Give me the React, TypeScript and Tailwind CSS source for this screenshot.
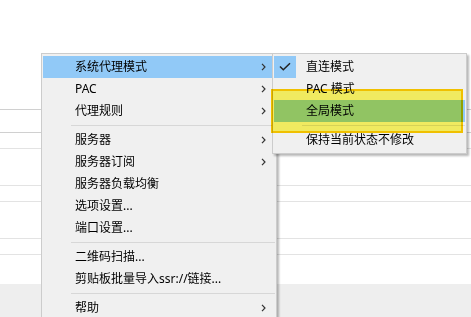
import { Fragment } from "react";

type MenuEntry =
  | { kind: "item"; label: string; arrow?: boolean; active?: boolean; checked?: boolean }
  | { kind: "sep" };

const mainMenu: MenuEntry[] = [
  { kind: "item", label: "系统代理模式", arrow: true, active: true },
  { kind: "item", label: "PAC", arrow: true },
  { kind: "item", label: "代理规则", arrow: true },
  { kind: "sep" },
  { kind: "item", label: "服务器", arrow: true },
  { kind: "item", label: "服务器订阅", arrow: true },
  { kind: "item", label: "服务器负载均衡" },
  { kind: "item", label: "选项设置..." },
  { kind: "item", label: "端口设置..." },
  { kind: "sep" },
  { kind: "item", label: "二维码扫描..." },
  { kind: "item", label: "剪贴板批量导入ssr://链接..." },
  { kind: "sep" },
  { kind: "item", label: "帮助", arrow: true },
];

const subMenu: MenuEntry[] = [
  { kind: "item", label: "直连模式", checked: true },
  { kind: "item", label: "PAC 模式" },
  { kind: "item", label: "全局模式", active: true },
  { kind: "sep" },
  { kind: "item", label: "保持当前状态不修改" },
];

const Chevron = () => (
  <svg width="5" height="8" viewBox="0 0 5 8" className="shrink-0">
    <path d="M1 0.8 L4 4 L1 7.2" fill="none" stroke="#333" strokeWidth="1.2" />
  </svg>
);

const Check = () => (
  <svg width="22" height="22" viewBox="0 0 22 22">
    <path d="M6 10.5 L9.3 13.8 L16 7.2" fill="none" stroke="#222" strokeWidth="1.5" />
  </svg>
);

const Menu = ({ entries, className }: { entries: MenuEntry[]; className: string }) => (
  <div
    className={`absolute flex flex-col border border-[#cccccc] bg-[#f0f0f0] px-[1px] py-[2px] shadow-[2px_2px_2px_rgba(0,0,0,0.28)] ${className}`}
  >
    {entries.map((e, i) => (
      <Fragment key={i}>
        {e.kind === "sep" ? (
          <div className="flex h-[7px] items-center pl-[28px]">
            <div className="h-px w-full bg-[#d7d7d7]" />
          </div>
        ) : (
          <div
            className={`relative flex h-[22px] items-center pl-[32px] pr-[9px] text-[12px] text-black ${
              e.active ? "bg-[#91c9f7]" : ""
            }`}
          >
            {e.checked ? (
              <div className="absolute left-0 top-0 h-[22px] w-[22px] bg-[#91c9f7]">
                <Check />
              </div>
            ) : null}
            <span className="flex-1 leading-none">{e.label}</span>
            {e.arrow ? <Chevron /> : null}
          </div>
        )}
      </Fragment>
    ))}
  </div>
);

export default function App() {
  return (
    <div
      className="relative h-[317px] w-[471px] overflow-hidden bg-white"
      style={{ fontFamily: '"Noto Sans", "Noto Sans CJK SC", sans-serif' }}
    >
      <div className="flex h-full flex-col">
        <div className="h-[110px] border-b border-[#d0d0d0]" />
        <div className="h-[23px] border-b border-[#d0d0d0]" />
        <div className="h-[16px] border-b border-[#e3e3e3]" />
        <div className="h-[37px] border-b border-[#e3e3e3]" />
        <div className="h-[16px] border-b border-[#e3e3e3]" />
        <div className="h-[37px] border-b border-[#e3e3e3]" />
        <div className="h-[16px] border-b border-[#e3e3e3]" />
        <div className="h-[29px]" />
        <div className="flex-1 bg-[#eeeeee]" />
      </div>

      <Menu entries={mainMenu} className="left-[41px] top-[53px] w-[236px]" />
      <Menu entries={subMenu} className="left-[272px] top-[53px] w-[195px]" />

      <div className="absolute left-[271px] top-[89px] h-[44px] w-[192px] border-2 border-[#ffcc00] bg-[#fff966] mix-blend-multiply" />
    </div>
  );
}
